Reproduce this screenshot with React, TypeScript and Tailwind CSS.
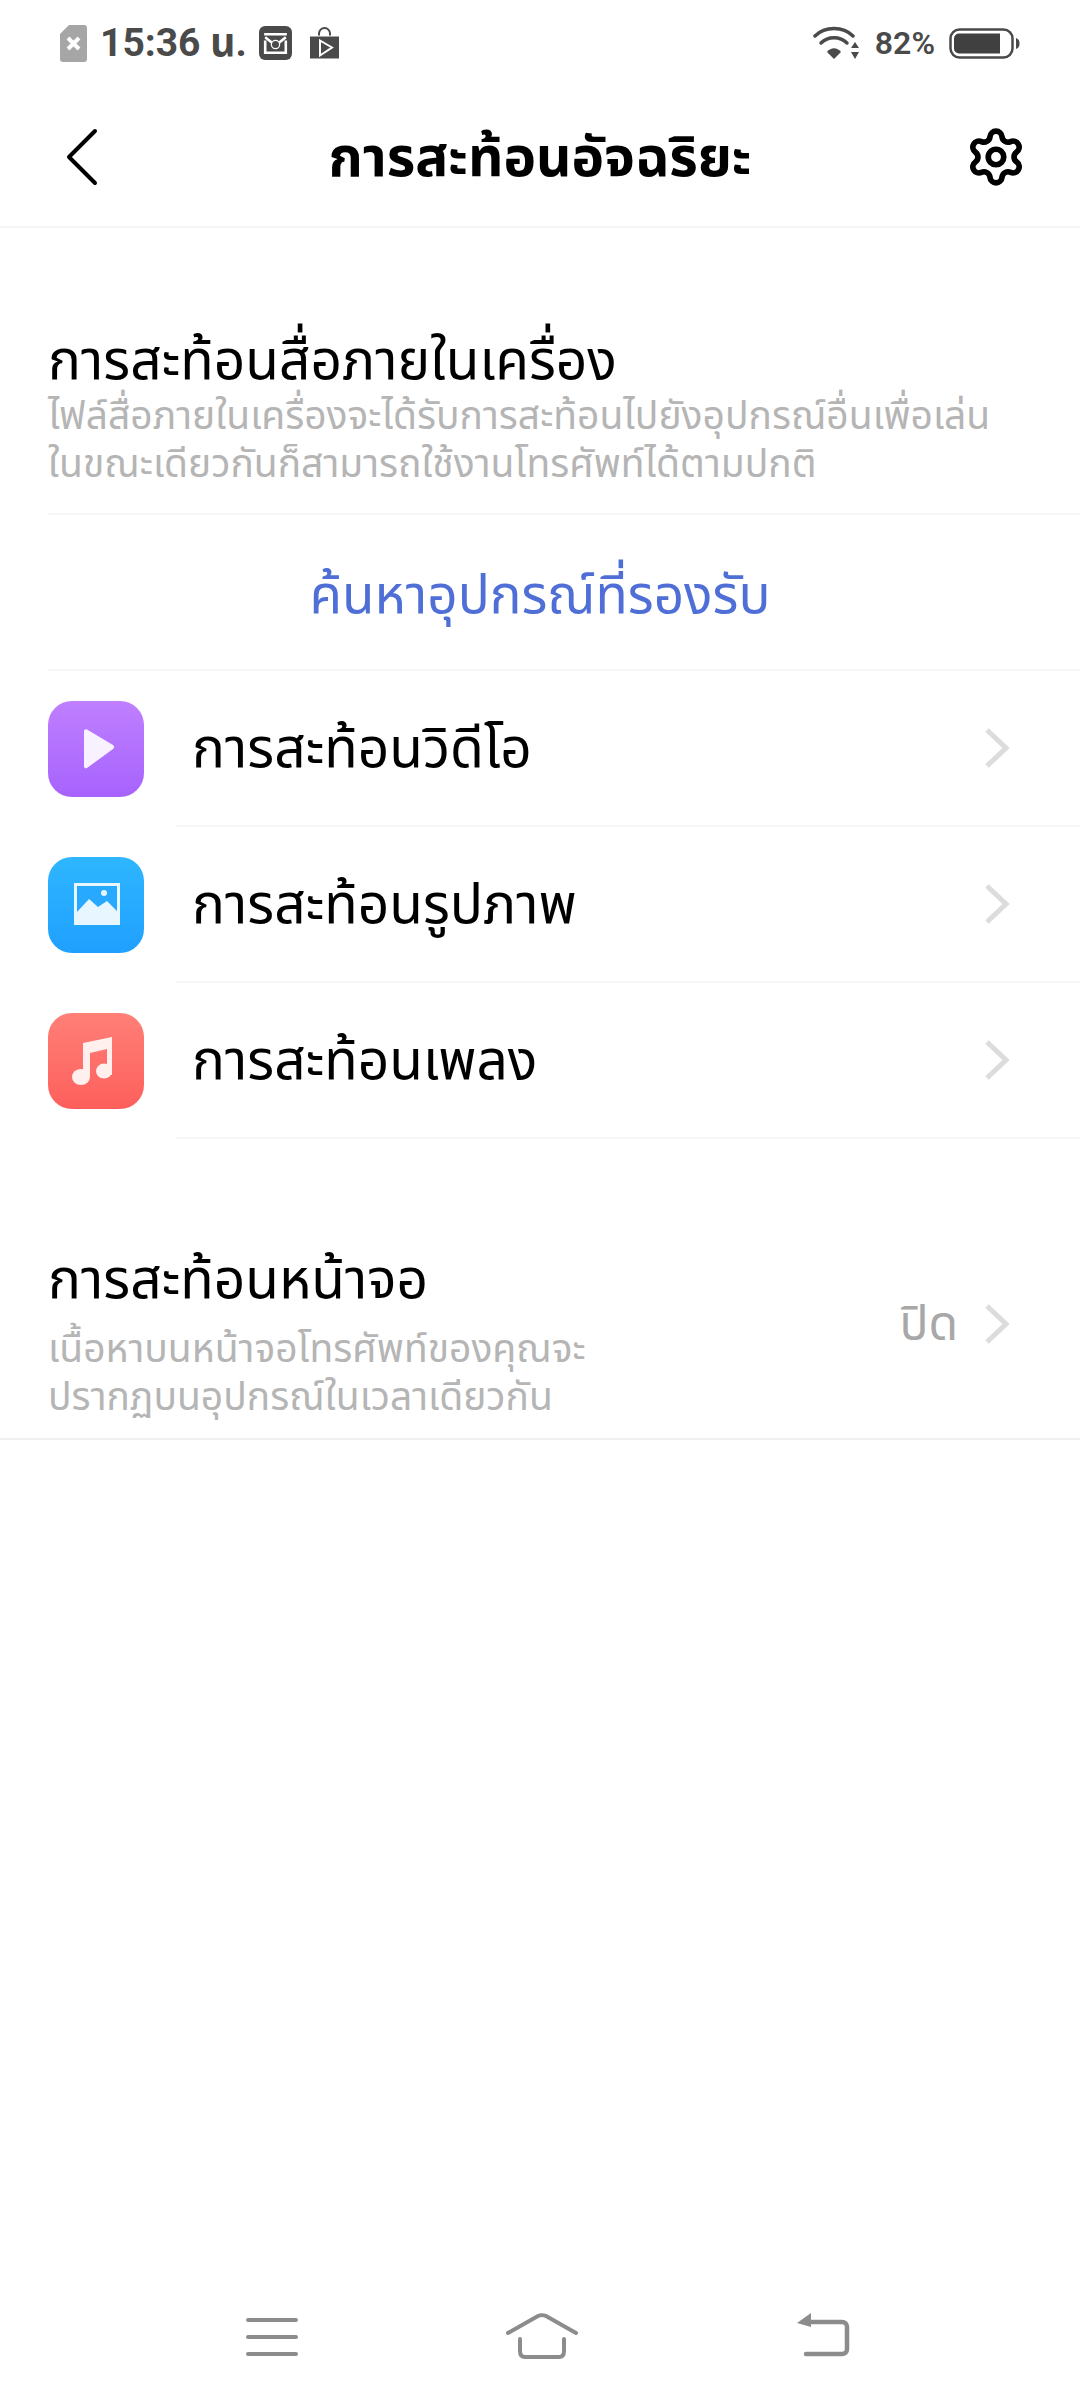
import { Settings } from "lucide-react";

const chevron = (
  <svg width="26" height="42" viewBox="0 0 26 42" fill="none" className="shrink-0">
    <path d="M3 3l19 18L3 39" stroke="#dcdcdc" strokeWidth="5" />
  </svg>
);

const rows = [
  {
    label: "การสะท้อนวิดีโอ",
    bg: "bg-gradient-to-b from-[#bf7fff] to-[#a762fd]",
    icon: (
      <svg width="96" height="96" viewBox="0 0 96 96">
        <path d="M36 30.5c0-2 1.600-2.800 3-2l26 15.500c1.600 1 1.600 3 0 4L39 67c-1.400.9-3 0-3-2z" fill="#f8f1ff" />
      </svg>
    ),
  },
  {
    label: "การสะท้อนรูปภาพ",
    bg: "bg-gradient-to-b from-[#2eb6ff] to-[#20a0ff]",
    icon: (
      <svg width="96" height="96" viewBox="0 0 96 96">
        <path d="M26 26h46v42H26z" fill="#e8f6ff" />
        <path d="M29 29h40v25L59 44l-9 6-9-8-12 13z" fill="#27a9ff" />
        <circle cx="56" cy="36" r="3" fill="#e8f6ff" />
      </svg>
    ),
  },
  {
    label: "การสะท้อนเพลง",
    bg: "bg-gradient-to-b from-[#ff7f77] to-[#fd5f5c]",
    icon: (
      <svg width="96" height="96" viewBox="0 0 96 96">
        <path d="M35 30l29-6v38h-5V36l-17 4v24h-7z" fill="#fff0ee" />
        <ellipse cx="33" cy="64" rx="9" ry="8" fill="#fff0ee" />
        <ellipse cx="56" cy="58" rx="8" ry="7.500" fill="#fff0ee" />
      </svg>
    ),
  },
];

function StatusBar() {
  return (
    <div className="flex h-[80px] items-center justify-between pl-[60px] pr-[60px] pt-[6px] text-[#4a4a4a]">
      <div className="flex items-center">
        <svg width="27" height="37" viewBox="0 0 27 37">
          <path d="M9 0h15a3 3 0 0 1 3 3v31a3 3 0 0 1-3 3H3a3 3 0 0 1-3-3V9z" fill="#a6a6a6" />
          <path d="M8 13l11 11M19 13L8 24" stroke="#fff" strokeWidth="4" />
        </svg>
        <span className="ml-[13px] text-[39px] font-bold leading-none">15:36 น.</span>
        <svg width="33" height="34" viewBox="0 0 32 33" className="ml-[12px]">
          <rect width="32" height="33" rx="6" fill="#4a4a4a" />
          <path d="M5 8h22M6 11l10 8 10-8M6 14v12h20V14" fill="none" stroke="#fff" strokeWidth="2.500" />
          <circle cx="16" cy="18" r="4" fill="#4a4a4a" stroke="#fff" strokeWidth="1.200" />
        </svg>
        <svg width="29" height="32" viewBox="0 0 29 31" className="ml-[18px]">
          <path d="M9 8V6a5.500 5.500 0 0 1 11 0v2" fill="none" stroke="#4a4a4a" strokeWidth="2" />
          <path d="M0 9h29v22H0z" fill="#4a4a4a" />
          <path d="M10 13l12 7-12 8z" fill="none" stroke="#fff" strokeWidth="2" />
        </svg>
      </div>
      <div className="flex items-center">
        <svg width="46" height="34" viewBox="0 0 46 34" fill="none">
          <path d="M2 10C12 0 30 0 40 10" stroke="#4a4a4a" strokeWidth="3.500" strokeLinecap="round" />
          <path d="M8 17c7-7 19-7 26 0" stroke="#4a4a4a" strokeWidth="3.500" strokeLinecap="round" />
          <path d="M14 26c4-5 10-5 14 0l-7 7z" fill="#4a4a4a" />
          <path d="M38 22h8l-4-6zM38 26h8l-4 7z" fill="#4a4a4a" />
        </svg>
        <span className="ml-[16px] text-[32px] font-semibold leading-none">82%</span>
        <svg width="71" height="31" viewBox="0 0 71 31" fill="none" className="ml-[14px]">
          <rect x="1.500" y="1.500" width="62" height="28" rx="9" stroke="#4a4a4a" strokeWidth="2.500" />
          <path d="M10 5.500h41v20H10a5 5 0 0 1-5-5v-10a5 5 0 0 1 5-5z" fill="#404040" />
          <path d="M67 10c3 1 3.500 3 3.500 5.500S70 20 67 21z" fill="#4a4a4a" />
        </svg>
      </div>
    </div>
  );
}

function Header() {
  return (
    <div className="flex h-[148px] items-center border-b-2 border-[#f5f5f5] pl-[53px] pr-[53px] pt-[8px]">
      <div className="flex-1">
        <svg width="32" height="58" viewBox="0 0 32 58" fill="none" className="ml-[13px]">
          <path d="M29 3L3 29l26 26" stroke="#000" strokeWidth="4" strokeLinecap="round" strokeLinejoin="round" />
        </svg>
      </div>
      <h1 className="text-[55px] font-bold leading-none text-black">การสะท้อนอัจฉริยะ</h1>
      <div className="flex flex-1 justify-end">
        <Settings size={62} color="#000" strokeWidth={2.2} />
      </div>
    </div>
  );
}

export default function App() {
  return (
    <div className="flex h-[2400px] w-[1080px] flex-col bg-white font-['Roboto','Noto_Sans','Noto_Sans_Thai','DejaVu_Sans',sans-serif]">
      <StatusBar />
      <Header />

      <div className="pl-[48px] pt-[101px]">
        <h2 className="text-[55px] leading-[63px] text-black">การสะท้อนสื่อภายในเครื่อง</h2>
        <p className="border-b-2 border-[#f6f6f6] pb-[25px] text-[39px] leading-[48px] text-[#b5b5b5]">
          ไฟล์สื่อภายในเครื่องจะได้รับการสะท้อนไปยังอุปกรณ์อื่นเพื่อเล่น
          <br />
          ในขณะเดียวกันก็สามารถใช้งานโทรศัพท์ได้ตามปกติ
        </p>
      </div>

      <div className="ml-[48px] flex h-[156px] items-center justify-center border-b-2 border-[#f6f6f6] pr-[48px] pt-[8px] text-[53px] text-[#4f6fd6]">
        ค้นหาอุปกรณ์ที่รองรับ
      </div>

      {rows.map((row) => (
        <div key={row.label} className="flex h-[156px] items-center pl-[48px]">
          <div className={`h-[96px] w-[96px] shrink-0 rounded-[24px] ${row.bg}`}>{row.icon}</div>
          <div className="ml-[32px] flex h-full flex-1 items-center justify-between border-b-2 border-[#f6f6f6] pl-[16px] pr-[70px] text-[55px] text-black">
            <span>{row.label}</span>
            {chevron}
          </div>
        </div>
      ))}

      <div className="mt-[64px] flex h-[237px] items-start justify-between border-b-2 border-[#f0f0f0] pl-[48px] pr-[70px]">
        <div className="pt-[46px]">
          <h2 className="text-[55px] leading-[60px] text-black">การสะท้อนหน้าจอ</h2>
          <p className="mt-[16px] text-[39px] leading-[48px] text-[#b5b5b5]">
            เนื้อหาบนหน้าจอโทรศัพท์ของคุณจะ
            <br />
            ปรากฏบนอุปกรณ์ในเวลาเดียวกัน
          </p>
        </div>
        <div className="mt-[6px] flex items-center gap-[26px] self-center text-[48px] text-[#a8a8a8]">
          <span>ปิด</span>
          {chevron}
        </div>
      </div>

      <div className="mt-auto flex h-[83px] items-start justify-between pl-[246px] pr-[230px]">
        <svg width="52" height="42" viewBox="0 0 52 42" fill="none" stroke="#8c8c8c" strokeWidth="4" strokeLinecap="round">
          <path d="M2 3h48M2 20h48M2 37h48" />
        </svg>
        <svg width="72" height="46" viewBox="0 0 72 46" fill="none" stroke="#8c8c8c" strokeWidth="4" strokeLinecap="round" strokeLinejoin="round" className="-mt-[4px] mr-[10px]">
          <path d="M2 20L32 3c2-1 6-1 8 0l30 17M14 26v12c0 4 2 6 5 6h34c3 0 5-2 5-6V26" />
        </svg>
        <svg width="54" height="46" viewBox="0 0 54 46" fill="none" className="-mt-[4px]">
          <path d="M8 9h38c3 0 5 2 5 5v22c0 3-2 5-5 5H10" stroke="#8c8c8c" strokeWidth="4.500" strokeLinecap="round" />
          <path d="M15 0v14L1 10z" fill="#8c8c8c" />
        </svg>
      </div>
    </div>
  );
}
